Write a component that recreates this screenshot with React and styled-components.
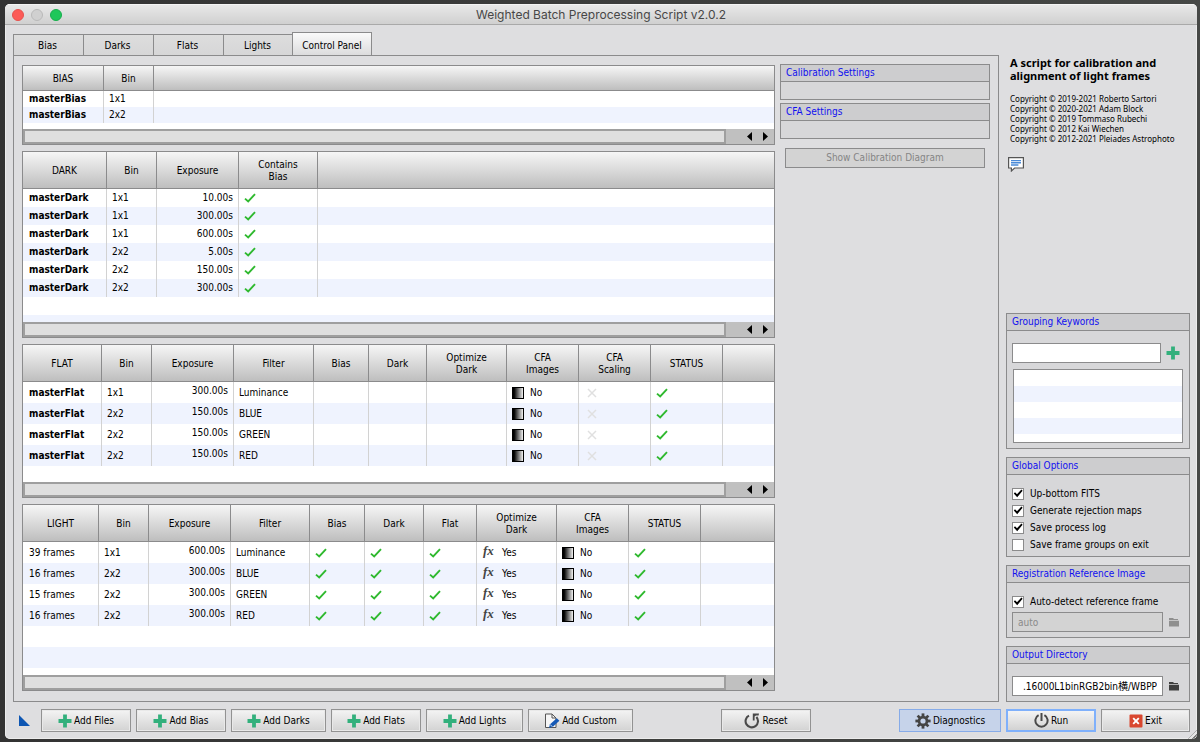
import React from "react";
import styled, { createGlobalStyle, css } from "styled-components";

const LINE = "#8b8b8c";
const FACE = "#dedee0";
const STRIPE = "#eff3fe";

const Global = createGlobalStyle`
  *, *::before, *::after { box-sizing: border-box; }
  body {
    margin: 0;
    background: linear-gradient(90deg, #333333, #464846);
    color: #000;
    font: 10px/12px "DejaVu Sans Condensed", "Noto Sans CJK SC", sans-serif;
  }
  button, input { font: inherit; color: inherit; margin: 0; }
  svg { display: block; flex: none; }
`;

const Desktop = styled.div`
  display: flex;
  min-height: 100vh;
  padding: 4px 3px 3px 5px;
`;

const Window = styled.div`
  flex: 1;
  min-width: 0;
  display: flex;
  flex-direction: column;
  background: ${FACE};
  border-radius: 5px;
  overflow: hidden;
  box-shadow: inset 0 0 0 1px #ececec;
`;

const TitleBar = styled.header`
  display: grid;
  grid-template-columns: 1fr auto 1fr;
  align-items: center;
  height: 21px;
  padding: 0 7px;
  background: linear-gradient(#e8e8e8, #d0d0d0);
  border-top: 1px solid #f4f4f4;
  border-bottom: 1px solid #a9a9a9;
`;

const Lights = styled.div`
  display: flex;
  gap: 7px;
`;

const Light = styled.button`
  width: 12px;
  height: 12px;
  padding: 0;
  border-radius: 50%;
  border: 1px solid ${(p) => p.$edge};
  background: ${(p) => p.$fill};
`;

const WindowTitle = styled.h1`
  margin: 0;
  font: 400 12px/18px Inter, sans-serif;
  color: #474747;
`;

const Content = styled.div`
  flex: 1;
  display: flex;
  flex-direction: column;
  gap: 7px;
  padding: 7px 7px 7px 8px;
`;

const Main = styled.div`
  flex: 1;
  display: flex;
  gap: 7px;
`;

const TabArea = styled.section`
  flex: 1;
  min-width: 0;
  display: flex;
  flex-direction: column;
`;

const TabStrip = styled.div`
  display: flex;
  align-items: flex-end;
  height: 23px;
`;

const Tab = styled.button`
  width: 70px;
  height: 21px;
  padding: 1px 2px 0 0;
  border: 1px solid ${LINE};
  border-width: 1px 0 0 1px;
  background: linear-gradient(#dddddd, #d6d6d7);
  ${(p) =>
    p.$active &&
    css`
      width: 80px;
      height: 23px;
      margin-left: -1px;
      padding: 3px 0 0;
      border-width: 1px 1px 0 1px;
      background: linear-gradient(#fafafa, #dcdcdd);
    `}
`;

const Panel = styled.div`
  flex: 1;
  display: flex;
  gap: 5px;
  padding: 8px 8px 10px;
  border: 1px solid ${LINE};
`;

const Lists = styled.div`
  flex: 1;
  min-width: 0;
  display: flex;
  flex-direction: column;
  gap: 6px;
  padding-top: 1px;
`;

const ListBox = styled.div`
  display: flex;
  flex-direction: column;
  flex-grow: ${(p) => (p.$grow ? 1 : 0)};
  border: 1px solid ${LINE};
`;

const Viewport = styled.div`
  flex: 1;
  min-height: ${(p) => p.$min}px;
  overflow: hidden;
  background-color: #fff;
  background-image: linear-gradient(#fff 50%, ${STRIPE} 50%);
  background-size: 100% ${(p) => p.$row * 2}px;
  background-position: 0 ${(p) => p.$head}px;
`;

const Table = styled.table`
  width: 100%;
  table-layout: fixed;
  border-collapse: separate;
  border-spacing: 0;
`;

const Col = styled.col`
  width: ${(p) => (p.$w ? p.$w + "px" : "auto")};
`;

const Th = styled.th`
  height: ${(p) => p.$h}px;
  padding: 2px 10px 0;
  font-weight: 400;
  text-align: center;
  border-right: 1px solid ${LINE};
  border-bottom: 1px solid ${LINE};
  background: linear-gradient(#f6f6f6, #bebebe);
  &:last-child { border-right: 0; }
`;

const Td = styled.td`
  height: ${(p) => p.$h}px;
  padding: ${(p) => (p.$right ? "3px 5px 0" : "0 5px")};
  vertical-align: ${(p) => (p.$right ? "top" : "middle")};
  text-align: ${(p) => (p.$right ? "right" : "left")};
  font-weight: ${(p) => (p.$bold ? 700 : 400)};
  white-space: nowrap;
  border-right: 1px solid #d2d2d2;
  &:first-child { padding-left: 6px; }
  &:last-child { border-right: 0; }
`;

const Mark = styled.span`
  display: flex;
  align-items: center;
  gap: 6px;
`;

const Fx = styled.i`
  width: 14px;
  padding: 0 0 4px 1px;
  font: italic 700 13px/12px "Liberation Serif", serif;
  color: #444;
`;

const ScrollBar = styled.div`
  display: flex;
  align-items: center;
  height: 15px;
  background: #c0c0c0;
`;

const Thumb = styled.div`
  flex: 1;
  align-self: stretch;
  border: 2px solid #9f9f9f;
  background: #dfdfdf;
  margin-right: 16px;
`;

const Arrow = styled.button`
  display: flex;
  width: 16px;
  padding: 0;
  border: 0;
  background: none;
`;

const Options = styled.div`
  flex: 0 0 210px;
  display: flex;
  flex-direction: column;
  gap: 3px;
`;

const Group = styled.section`
  border: 1px solid ${LINE};
  background: #d7d7d9;
`;

const GroupTitle = styled.h2`
  margin: 0;
  padding: 0 5px;
  font: inherit;
  line-height: 15px;
  height: 17px;
  color: #1010f0;
  background: #cdcdcf;
  border-bottom: 1px solid ${LINE};
`;

const GroupBody = styled.div`
  display: flex;
  flex-direction: column;
  gap: ${(p) => p.$gap || 0}px;
  padding: 12px 5px 5px;
`;

const EmptyBody = styled.div`
  height: 17px;
`;

const Button = styled.button`
  display: flex;
  align-items: center;
  justify-content: center;
  gap: 2px;
  height: 23px;
  min-width: ${(p) => p.$w || 90}px;
  padding: 0;
  white-space: nowrap;
  border: 1px solid #929292;
  box-shadow: inset 0 0 0 1px #e9e9e9;
  background: linear-gradient(#f4f4f4, #d2d2d2);
  ${(p) =>
    p.$kind === "default" &&
    css`
      border: 2px solid #7fb0fb;
      box-shadow: none;
    `}
  ${(p) =>
    p.$kind === "tinted" &&
    css`
      border-color: #86abe8;
      box-shadow: none;
      background: #c6d3ea;
    `}
`;

const DisabledButton = styled.button`
  height: 20px;
  margin: 6px 5px 0;
  border: 1px solid ${LINE};
  background: #d3d3d3;
  color: #858585;
`;

const Sidebar = styled.aside`
  flex: 0 0 184px;
  display: flex;
  flex-direction: column;
  gap: 8px;
`;

const About = styled.div`
  flex: 1;
  padding: 24px 0 8px 4px;
`;

const AboutTitle = styled.p`
  margin: 0;
  font: 700 11px/13px "Noto Sans", sans-serif;
`;

const Copyright = styled.p`
  margin: 12px 0 13px;
  font: 8px/10px "Noto Sans", sans-serif;
  white-space: nowrap;
`;

const HelpButton = styled.button`
  display: block;
  margin-left: -2px;
  padding: 0;
  border: 0;
  background: none;
`;

const IconButton = styled.button`
  display: flex;
  align-items: center;
  justify-content: center;
  width: ${(p) => p.$w || 21}px;
  padding: 0;
  border: 0;
  background: none;
`;

const FieldRow = styled.div`
  display: flex;
`;

const TextField = styled.input`
  flex: 1;
  min-width: 0;
  height: 20px;
  padding: ${(p) => (p.$end ? "0 5px 2px" : "0 5px")};
  border: 1px solid ${LINE};
  outline: 0;
  background: #fff;
  text-align: ${(p) => (p.$end ? "right" : "left")};
  &:disabled {
    color: #8a8a8a;
    background: #d3d3d3;
  }
`;

const Keywords = styled.div`
  height: 74px;
  margin: 0 1px;
  border: 1px solid ${LINE};
  background: linear-gradient(#fff 50%, ${STRIPE} 50%) 0 0 / 100% 32px;
`;

const CheckLabel = styled.label`
  display: flex;
  align-items: center;
  gap: 6px;
  height: 13px;
`;

const CheckBox = styled.input`
  appearance: none;
  width: 12px;
  height: 12px;
  border: 1px solid ${LINE};
  background: #fff;
  &:checked::before {
    content: "";
    display: block;
    width: 10px;
    height: 10px;
    background: #000;
    clip-path: polygon(8% 50%, 20% 38%, 40% 58%, 84% 10%, 96% 22%, 42% 88%);
  }
`;

const Footer = styled.footer`
  display: flex;
  align-items: center;
  gap: 5px;
`;

const Corner = styled.span`
  display: flex;
  width: 23px;
  padding-left: 6px;
`;

const Space = styled.span`
  flex: 1;
`;

const GripRow = styled.div`
  display: flex;
  justify-content: flex-end;
`;

const Grip = styled.span`
  width: 9px;
  height: 9px;
  margin-top: -9px;
  background: repeating-linear-gradient(135deg, #7c7c7c 0 1px, #e6e6e6 1px 3px);
  clip-path: polygon(100% 0, 100% 100%, 0 100%);
`;

const Tick = () => (
  <svg width="12" height="10" viewBox="0 0 12 10">
    <path d="M1 5.6 L4.2 8.4 L11 1.2" fill="none" stroke="#2fb92f" strokeWidth="1.9" />
  </svg>
);

const Cross = () => (
  <svg width="10" height="10" viewBox="0 0 10 10">
    <path d="M1 1 L9 9 M9 1 L1 9" stroke="#e0e0e0" strokeWidth="1.5" />
  </svg>
);

const CrossPad = styled.span`
  display: flex;
  padding-left: 3px;
`;

const Ramp = () => (
  <svg width="12" height="12" viewBox="0 0 12 12">
    <defs>
      <linearGradient id="ramp">
        <stop offset="0.15" stopColor="#000" />
        <stop offset="1" stopColor="#fff" />
      </linearGradient>
    </defs>
    <rect x="0.5" y="0.5" width="11" height="11" fill="url(#ramp)" stroke="#000" />
  </svg>
);

const Plus = () => (
  <svg width="14" height="14" viewBox="0 0 14 14">
    <path d="M5.1 0.5 H8.9 V5.1 H13.5 V8.9 H8.9 V13.5 H5.1 V8.9 H0.5 V5.1 H5.1 Z" fill="#32b07c" />
  </svg>
);

const EditPage = () => (
  <svg width="16" height="16" viewBox="0 0 16 16">
    <path d="M1.5 1 H8 L12 5 V14.5 H1.5 Z" fill="#f6f6f6" stroke="#555" />
    <path d="M8 1 V5 H12" fill="none" stroke="#555" />
    <path d="M5 14.8 L6 11.2 L12.8 5.2 L15.4 7.8 L8.6 14 Z" fill="#1458b5" />
    <path d="M6 11.4 L8.4 13.8" stroke="#fff" strokeWidth="0.8" />
  </svg>
);

const ResetIcon = () => (
  <svg width="16" height="16" viewBox="0 0 16 16">
    <path d="M5 2.6 A6.2 6.2 0 1 0 12.4 4" fill="none" stroke="#4a4a4a" strokeWidth="2.1" />
    <path d="M8.8 0.6 H15 L14.6 2.4 H12 L10.6 3.6 V7.6 H8.8 Z" fill="#4a4a4a" />
  </svg>
);

const Gear = () => (
  <svg width="16" height="16" viewBox="0 0 16 16">
    {[0, 45, 90, 135].map((a) => (
      <rect key={a} x="6.6" y="0.4" width="2.8" height="15.2" fill="#454545" transform={`rotate(${a} 8 8)`} />
    ))}
    <circle cx="8" cy="8" r="5.3" fill="#454545" />
    <circle cx="8" cy="8" r="2.6" fill="#c6d3ea" />
  </svg>
);

const Power = () => (
  <svg width="15" height="15" viewBox="0 0 15 15">
    <path d="M4.6 2.2 A6.1 6.1 0 1 0 10.4 2.2" fill="none" stroke="#4a4a4a" strokeWidth="2" />
    <path d="M7.5 0 V8" stroke="#4a4a4a" strokeWidth="2" />
  </svg>
);

const ExitIcon = () => (
  <svg width="14" height="14" viewBox="0 0 14 14">
    <rect x="0.5" y="0.5" width="13" height="13" rx="1" fill="#d9472f" />
    <path d="M4.2 4.2 L9.8 9.8 M9.8 4.2 L4.2 9.8" stroke="#fff" strokeWidth="1.9" />
  </svg>
);

const Folder = ({ color }) => (
  <svg width="10" height="10" viewBox="0 0 10 10">
    <path d="M0 1 H4 L5 2 H9 V3 H0 Z" fill={color} />
    <path d="M0 3.8 H10 V9.4 H0 Z" fill={color} />
  </svg>
);

const Speech = () => (
  <svg width="16" height="15" viewBox="0 0 16 15">
    <path d="M0.6 0.6 H15.4 V11 H6.6 L3.4 14 V11 H0.6 Z" fill="#fff" stroke="#555" strokeWidth="1.2" />
    <path d="M3 3.6 H13 M3 5.8 H13 M3 8 H10.4" stroke="#4a8ad8" strokeWidth="1.4" />
  </svg>
);

const cells = {
  ok: () => <Tick />,
  off: () => <CrossPad><Cross /></CrossPad>,
  no: () => <Mark><Ramp />No</Mark>,
  yes: () => <Mark><Fx>fx</Fx>Yes</Mark>,
};

function DataList({ label, head, row, min, cols, rows, grow }) {
  return (
    <ListBox $grow={grow}>
      <Viewport $row={row} $head={head} $min={min}>
        <Table aria-label={label}>
          <colgroup>
            {cols.map((c, i) => <Col key={i} $w={c[1]} />)}
            <Col />
          </colgroup>
          <thead>
            <tr>
              {cols.map((c, i) => <Th key={i} $h={head}>{c[0]}</Th>)}
              <Th $h={head} />
            </tr>
          </thead>
          <tbody>
            {rows.map((r, i) => (
              <tr key={i}>
                {r.map((v, j) => (
                  <Td
                    key={j}
                    $h={row}
                    $right={cols[j][0] === "Exposure"}
                    $bold={j === 0 && v.startsWith("master")}
                  >
                    {cells[v] ? cells[v]() : v}
                  </Td>
                ))}
                <Td $h={row} />
              </tr>
            ))}
          </tbody>
        </Table>
      </Viewport>
      <ScrollBar>
        <Thumb />
        <Arrow aria-label="Scroll left">
          <svg width="16" height="9" viewBox="0 0 16 9"><path d="M10 0 V9 L5 4.5 Z" /></svg>
        </Arrow>
        <Arrow aria-label="Scroll right">
          <svg width="16" height="9" viewBox="0 0 16 9"><path d="M5 0 V9 L10 4.5 Z" /></svg>
        </Arrow>
      </ScrollBar>
    </ListBox>
  );
}

const biasCols = [["BIAS", 81], ["Bin", 50]];
const darkCols = [["DARK", 84], ["Bin", 50], ["Exposure", 82], ["Contains Bias", 79]];
const flatCols = [
  ["FLAT", 79], ["Bin", 50], ["Exposure", 82], ["Filter", 80], ["Bias", 55], ["Dark", 58],
  ["Optimize Dark", 80], ["CFA Images", 72], ["CFA Scaling", 72], ["STATUS", 72],
];
const lightCols = [
  ["LIGHT", 76], ["Bin", 50], ["Exposure", 82], ["Filter", 79], ["Bias", 55], ["Dark", 59],
  ["Flat", 53], ["Optimize Dark", 80], ["CFA Images", 72], ["STATUS", 72],
];

const biasRows = [["masterBias", "1x1"], ["masterBias", "2x2"]];
const darkRows = [
  ["1x1", "10.00s"], ["1x1", "300.00s"], ["1x1", "600.00s"],
  ["2x2", "5.00s"], ["2x2", "150.00s"], ["2x2", "300.00s"],
].map(([bin, exp]) => ["masterDark", bin, exp, "ok"]);
const flatRows = [
  ["1x1", "300.00s", "Luminance"], ["2x2", "150.00s", "BLUE"],
  ["2x2", "150.00s", "GREEN"], ["2x2", "150.00s", "RED"],
].map((r) => ["masterFlat", ...r, "", "", "", "no", "off", "ok"]);
const lightRows = [
  ["39 frames", "1x1", "600.00s", "Luminance"], ["16 frames", "2x2", "300.00s", "BLUE"],
  ["15 frames", "2x2", "300.00s", "GREEN"], ["16 frames", "2x2", "300.00s", "RED"],
].map((r) => [...r, "ok", "ok", "ok", "yes", "no", "ok"]);

const globalOptions = [
  ["Up-bottom FITS", true],
  ["Generate rejection maps", true],
  ["Save process log", true],
  ["Save frame groups on exit", false],
];

const Check = ({ label, checked }) => (
  <CheckLabel>
    <CheckBox type="checkbox" defaultChecked={checked} />
    {label}
  </CheckLabel>
);

export default function App() {
  return (
    <Desktop>
      <Global />
      <Window>
        <TitleBar>
          <Lights>
            <Light aria-label="Close" $fill="#fc5b57" $edge="#e5524e" />
            <Light aria-label="Minimize" $fill="#d0d0d0" $edge="#b9b9b9" />
            <Light aria-label="Zoom" $fill="#1fc75a" $edge="#17ad4c" />
          </Lights>
          <WindowTitle>Weighted Batch Preprocessing Script v2.0.2</WindowTitle>
        </TitleBar>
        <Content>
          <Main>
            <TabArea>
              <TabStrip role="tablist">
                {["Bias", "Darks", "Flats", "Lights"].map((t) => (
                  <Tab key={t} role="tab">{t}</Tab>
                ))}
                <Tab role="tab" aria-selected="true" $active>Control Panel</Tab>
              </TabStrip>
              <Panel>
                <Lists>
                  <DataList label="Bias" head={25} row={16} min={63} cols={biasCols} rows={biasRows} />
                  <DataList label="Dark" head={37} row={18} min={170} cols={darkCols} rows={darkRows} />
                  <DataList label="Flat" head={37} row={21} min={137} cols={flatCols} rows={flatRows} />
                  <DataList label="Light" head={37} row={21} min={170} cols={lightCols} rows={lightRows} grow />
                </Lists>
                <Options>
                  <Group>
                    <GroupTitle>Calibration Settings</GroupTitle>
                    <EmptyBody />
                  </Group>
                  <Group>
                    <GroupTitle>CFA Settings</GroupTitle>
                    <EmptyBody />
                  </Group>
                  <DisabledButton disabled>Show Calibration Diagram</DisabledButton>
                </Options>
              </Panel>
            </TabArea>
            <Sidebar>
              <About>
                <AboutTitle>
                  A script for calibration and<br />alignment of light frames
                </AboutTitle>
                <Copyright>
                  Copyright © 2019-2021 Roberto Sartori<br />
                  Copyright © 2020-2021 Adam Block<br />
                  Copyright © 2019 Tommaso Rubechi<br />
                  Copyright © 2012 Kai Wiechen<br />
                  Copyright © 2012-2021 Pleiades Astrophoto
                </Copyright>
                <HelpButton aria-label="Documentation"><Speech /></HelpButton>
              </About>
              <Group>
                <GroupTitle>Grouping Keywords</GroupTitle>
                <GroupBody $gap={6}>
                  <FieldRow>
                    <TextField aria-label="Keyword" />
                    <IconButton aria-label="Add keyword" $w={23}><Plus /></IconButton>
                  </FieldRow>
                  <Keywords />
                </GroupBody>
              </Group>
              <Group>
                <GroupTitle>Global Options</GroupTitle>
                <GroupBody $gap={4}>
                  {globalOptions.map(([label, on]) => <Check key={label} label={label} checked={on} />)}
                </GroupBody>
              </Group>
              <Group>
                <GroupTitle>Registration Reference Image</GroupTitle>
                <GroupBody $gap={4}>
                  <Check label="Auto-detect reference frame" checked />
                  <FieldRow>
                    <TextField aria-label="Reference image" defaultValue="auto" disabled />
                    <IconButton aria-label="Select reference image"><Folder color="#8f8f8f" /></IconButton>
                  </FieldRow>
                </GroupBody>
              </Group>
              <Group>
                <GroupTitle>Output Directory</GroupTitle>
                <GroupBody>
                  <FieldRow>
                    <TextField aria-label="Output directory" defaultValue=".16000L1binRGB2bin横/WBPP" $end />
                    <IconButton aria-label="Select output directory"><Folder color="#3f3f3f" /></IconButton>
                  </FieldRow>
                </GroupBody>
              </Group>
            </Sidebar>
          </Main>
          <Footer>
            <Corner>
              <svg width="11" height="11" viewBox="0 0 11 11"><path d="M0 0 V11 H11 Z" fill="#0d56b3" /></svg>
            </Corner>
            <Button><Plus />Add Files</Button>
            <Button><Plus />Add Bias</Button>
            <Button $w={95}><Plus />Add Darks</Button>
            <Button><Plus />Add Flats</Button>
            <Button $w={97}><Plus />Add Lights</Button>
            <Button $w={105}><EditPage />Add Custom</Button>
            <Space />
            <Button><ResetIcon />Reset</Button>
            <Space />
            <Button $w={102} $kind="tinted"><Gear />Diagnostics</Button>
            <Button $kind="default"><Power />Run</Button>
            <Button $w={89}><ExitIcon />Exit</Button>
          </Footer>
        </Content>
        <GripRow><Grip /></GripRow>
      </Window>
    </Desktop>
  );
}
